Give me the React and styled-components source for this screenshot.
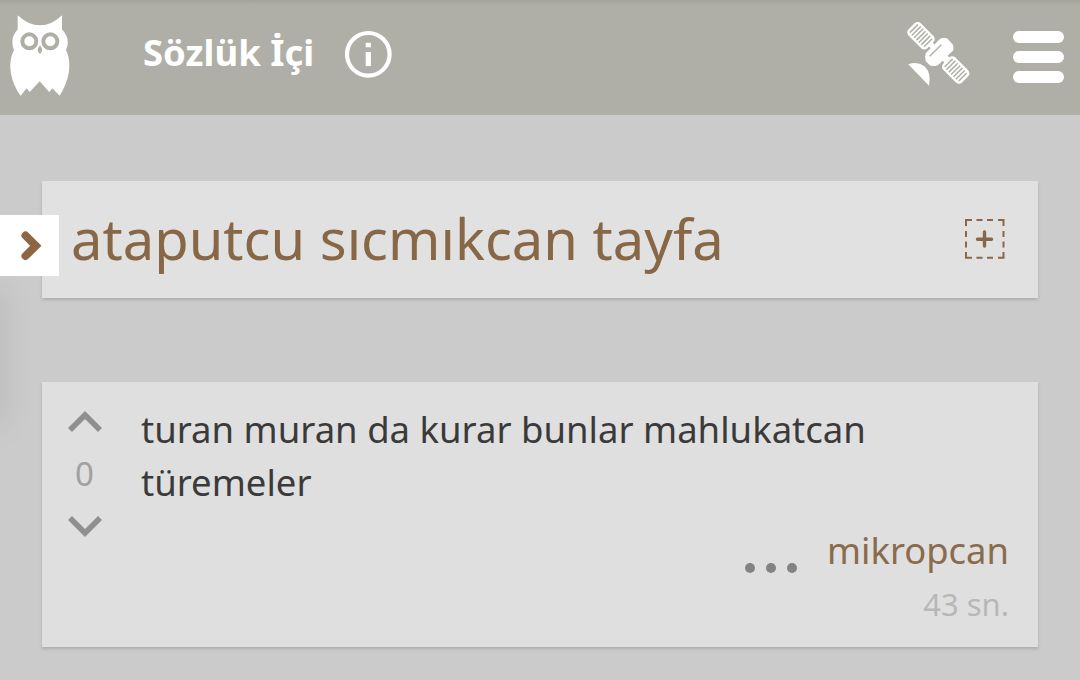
import React from "react";
import styled, { createGlobalStyle } from "styled-components";

const GlobalStyle = createGlobalStyle`
  * { box-sizing: border-box; }
  body {
    margin: 0;
    background: #cbcbcb;
    font-family: "Noto Sans", "Open Sans", sans-serif;
  }
`;

const Page = styled.div`
  position: relative;
  width: 1080px;
  height: 680px;
  overflow: hidden;
  background: #cbcbcb;
`;

const Header = styled.header`
  display: flex;
  align-items: flex-start;
  height: 115px;
  padding: 0 16px 0 10px;
  color: #fff;
  background: linear-gradient(#a3a39c 0, #afafa7 5px, #afafa7 100%);
`;

const Icon = styled.svg`
  display: block;
  flex: none;
  width: ${(p) => p.$w}px;
  height: ${(p) => p.$h}px;
  margin: ${(p) => p.$m || "0"};
`;

const Section = styled.h2`
  margin: 25px 0 0 73px;
  width: 202px;
  font-size: 36.5px;
  line-height: 54px;
  font-weight: 700;
  white-space: nowrap;
`;

const Spacer = styled.div`
  flex: 1;
`;

const Menu = styled.div`
  display: flex;
  flex-direction: column;
  gap: 8px;
  width: 51px;
  margin: 31px 0 0 43px;
`;

const MenuBar = styled.span`
  height: 12px;
  border-radius: 6px;
  background: #fff;
`;

const Main = styled.main`
  display: flex;
  flex-direction: column;
  gap: 84px;
  padding: 66px 42px 0;
`;

const Card = styled.section`
  display: flex;
  background: ${(p) => p.$bg};
  height: ${(p) => p.$height}px;
  box-shadow: 0 2px 3px rgba(0, 0, 0, 0.15);
`;

const Title = styled.h1`
  flex: 1;
  margin: 0;
  padding-left: 29px;
  font-size: 56.1px;
  line-height: 115px;
  font-weight: 400;
  color: #886746;
  white-space: nowrap;
`;

const Votes = styled.div`
  display: flex;
  flex-direction: column;
  align-items: center;
  width: 85px;
  padding-top: 29px;
`;

const Count = styled.span`
  height: 50px;
  margin: 16px 0;
  font-size: 33px;
  line-height: 50px;
  color: #a0a0a0;
`;

const Entry = styled.div`
  flex: 1;
  display: flex;
  flex-direction: column;
  padding: 21px 29px 0 14px;
`;

const Text = styled.p`
  margin: 0;
  font-size: 36.5px;
  line-height: 53px;
  color: #3a3a3a;
`;

const Meta = styled.div`
  display: flex;
  justify-content: flex-end;
  gap: 30px;
  margin-top: 14px;
`;

const Dots = styled.div`
  display: flex;
  gap: 11px;
  padding-top: 40px;
`;

const Dot = styled.span`
  width: 10px;
  height: 10px;
  border-radius: 50%;
  background: #838383;
`;

const Author = styled.span`
  font-size: 36.4px;
  line-height: 54px;
  color: #8a6b4d;
`;

const Time = styled.span`
  align-self: flex-end;
  font-size: 31px;
  line-height: 54px;
  color: #b7b7b7;
`;

const EdgeShadow = styled.div`
  position: absolute;
  left: -12px;
  top: 290px;
  width: 12px;
  height: 135px;
  box-shadow: 0 0 30px rgba(0, 0, 0, 0.17);
`;

const DrawerTab = styled.button`
  position: absolute;
  left: 0;
  top: 215px;
  width: 59px;
  height: 61px;
  padding: 0;
  border: 0;
  background: #fff;
`;

const Owl = () => (
  <Icon $w={60} $h={82} $m="15px 0 0" viewBox="30 45 180 246">
    <path
      fill="#fff"
      d="M53 46Q85 76 120 76Q155 76 186 46V88Q213 118 198 150C208 169 210 194 206 220Q199 257 179 287L157 265L148 276L119 244L89 276L80 265L62 287Q40 258 33 221C28 193 32 169 42 151Q28 117 53 88Z"
    />
    <g fill="none" stroke="#afafa7" strokeWidth="12">
      <circle cx="88" cy="124" r="21" />
      <circle cx="151" cy="124" r="21" />
    </g>
    <path fill="#afafa7" d="M120 136Q127 145 126 151Q124 159 120 162Q115 159 113 151Q113 144 120 136Z" />
  </Icon>
);

const Info = () => (
  <Icon $w={48} $h={48} $m="30px 0 0" viewBox="0 0 48 48">
    <circle cx="23.300" cy="24.300" r="21.300" fill="none" stroke="#fff" strokeWidth="4.200" />
    <rect x="20.700" y="12.800" width="5.200" height="4.500" fill="#fff" />
    <rect x="20.700" y="22" width="5.200" height="14" fill="#fff" />
  </Icon>
);

const Satellite = () => (
  <Icon $w={63} $h={66} $m="21px 0 0" viewBox="51 63 189 198">
    <g fill="#fff">
      <path d="M115 137L126 126L139 139L128 150ZM155 179L170 164L180 174L165 189Z" />
      <path d="M107 160L149 118Q153 114 160 114L171 115L188 133Q190 137 190 143V151L147 193Q143 197 137 198L122 197Q115 193 107 183Q104 169 107 160Z" />
      <path d="M55 193Q82 183 103 199Q125 218 117 257Z" />
    </g>
    <path d="M119 169L154 134" stroke="#afafa7" strokeWidth="4" fill="none" />
    {[[93, 107], [197, 210]].map(([x, y]) => (
      <g key={x} transform={`translate(${x} ${y}) rotate(45)`}>
        <rect x="-40" y="-26" width="80" height="52" rx="13" fill="#fff" />
        <path
          d="M-30 -17V17M-20 -19V19M-10 -19V19M0 -19V19M10 -19V19M20 -19V19M30 -17V17"
          stroke="#afafa7"
          strokeWidth="4.500"
          fill="none"
        />
      </g>
    ))}
  </Icon>
);

const AddBox = () => (
  <Icon $w={40} $h={40} $m="38px 33px 0 0" viewBox="0 0 40 40">
    <path
      d="M1 7V1H7M11.500 1H17.500M22 1H28M33 1H38.500V7M38.500 12V18M38.500 22.500V28.500M38.500 33V38.800H33M28 38.800H22M17.500 38.800H11.500M7 38.800H1V33M1 28.500V22.500M1 18V12"
      fill="none"
      stroke="#8b6744"
      strokeWidth="2"
    />
    <path d="M19.500 13V27M12.500 20.300H26.500" stroke="#886746" strokeWidth="3.400" strokeLinecap="round" />
  </Icon>
);

const Chevron = ({ down }) => (
  <Icon $w={34} $h={22} viewBox="0 0 34 22">
    <path d={down ? "M2 3L17 18L32 3" : "M2 19L17 4L32 19"} fill="none" stroke="#8f8f8f" strokeWidth="5.600" />
  </Icon>
);

export default function App() {
  return (
    <>
      <GlobalStyle />
      <Page>
        <Header>
          <Owl />
          <Section>Sözlük İçi</Section>
          <Info />
          <Spacer />
          <Satellite />
          <Menu>
            <MenuBar />
            <MenuBar />
            <MenuBar />
          </Menu>
        </Header>
        <Main>
          <Card $bg="#e1e1e1" $height={117}>
            <Title>ataputcu sıcmıkcan tayfa</Title>
            <AddBox />
          </Card>
          <Card $bg="#dfdfdf" $height={265}>
            <Votes>
              <Chevron />
              <Count>0</Count>
              <Chevron down />
            </Votes>
            <Entry>
              <Text>turan muran da kurar bunlar mahlukatcan türemeler</Text>
              <Meta>
                <Dots>
                  <Dot />
                  <Dot />
                  <Dot />
                </Dots>
                <Author>mikropcan</Author>
              </Meta>
              <Time>43 sn.</Time>
            </Entry>
          </Card>
        </Main>
        <EdgeShadow />
        <DrawerTab aria-label="Menü">
          <Icon $w={59} $h={61} viewBox="0 0 59 61">
            <path d="M25.500 20.500L35.800 30.800L25.500 41" fill="none" stroke="#8b6744" strokeWidth="8" strokeLinecap="round" />
          </Icon>
        </DrawerTab>
      </Page>
    </>
  );
}
